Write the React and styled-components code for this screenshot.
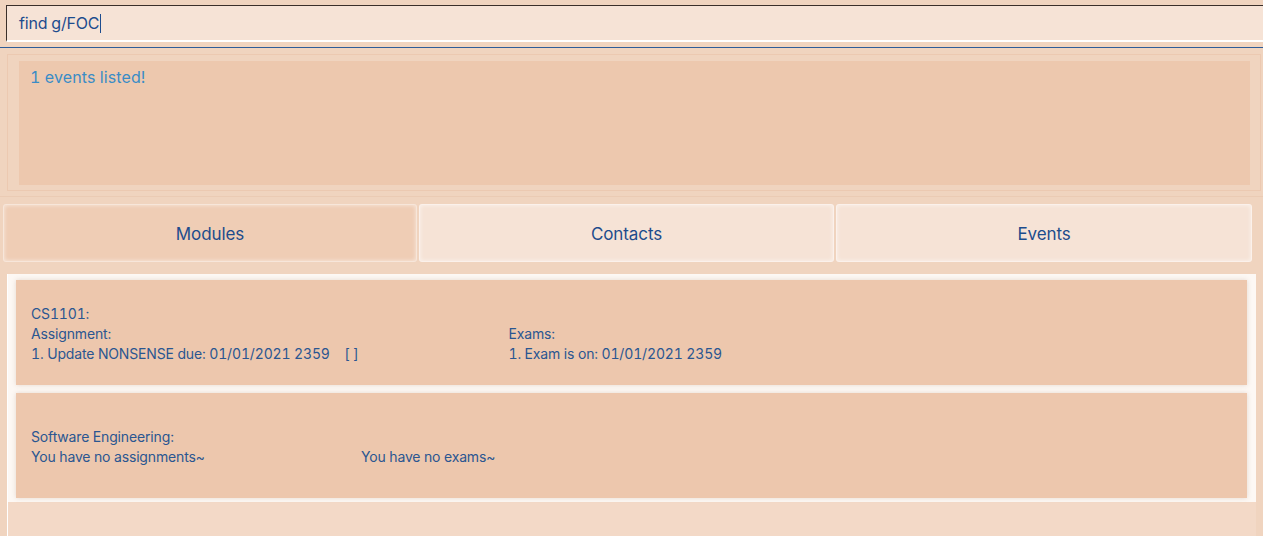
import React from "react";
import styled, { createGlobalStyle } from "styled-components";

const GlobalStyle = createGlobalStyle`
    html, body {
        margin: 0;
        padding: 0;
        background: #f0d4bf;
        font-family: "Inter", "Liberation Sans", sans-serif;
        font-variant-numeric: tabular-nums;
    }
`;

const modules = [
    {
        title: "CS1101:",
        assignments: ["1. Update NONSENSE due: 01/01/2021 2359\u00a0\u00a0\u00a0\u00a0[ ]"],
        exams: ["1. Exam is on: 01/01/2021 2359"],
    },
    {
        title: "Software Engineering:",
        assignments: [],
        exams: [],
    },
];

function App() {
    return (
        <Page>
            <GlobalStyle />
            <CommandBar>
                <CommandInput>
                    find g/FOC<Caret />
                </CommandInput>
            </CommandBar>
            <BlueRule />
            <ResultPanel>
                <ResultBox>1 events listed!</ResultBox>
            </ResultPanel>
            <FaintRule />
            <Tabs>
                <Tab selected>Modules</Tab>
                <Tab>Contacts</Tab>
                <Tab>Events</Tab>
            </Tabs>
            <ListArea>
                {modules.map((m) => (
                    <Cell key={m.title}>
                        <Card>
                            <Line>{m.title}</Line>
                            <Columns>
                                <Column>
                                    {m.assignments.length ? (
                                        <>
                                            <Line>Assignment:</Line>
                                            {m.assignments.map((a) => (
                                                <Line key={a}>{a}</Line>
                                            ))}
                                        </>
                                    ) : (
                                        <Line>You have no assignments~</Line>
                                    )}
                                </Column>
                                <Column>
                                    {m.exams.length ? (
                                        <>
                                            <Line>Exams:</Line>
                                            {m.exams.map((e) => (
                                                <Line key={e}>{e}</Line>
                                            ))}
                                        </>
                                    ) : (
                                        <Line>You have no exams~</Line>
                                    )}
                                </Column>
                            </Columns>
                        </Card>
                    </Cell>
                ))}
                <Filler />
            </ListArea>
        </Page>
    );
}

const Page = styled.div`
    width: 1263px;
    height: 536px;
    overflow: hidden;
    background: #f0d4bf;
`;

const CommandBar = styled.div`
    padding: 5px 0 0 6px;
`;

const CommandInput = styled.div`
    height: 34px;
    display: flex;
    align-items: center;
    padding-left: 12px;
    background: #f6e3d6;
    border-top: 1px solid #3a2f2a;
    border-left: 1px solid #3a2f2a;
    border-bottom: 2px solid #ffffff;
    color: #1d4c8e;
    font-size: 16px;
    letter-spacing: -0.2px;
`;

const Caret = styled.span`
    display: inline-block;
    width: 1px;
    height: 19px;
    margin-left: 1px;
    background: #1d4c8e;
`;

const BlueRule = styled.div`
    margin-top: 5px;
    height: 1px;
    background: #2e5c98;
`;

const ResultPanel = styled.div`
    margin: 6px 2px 0 7px;
    padding: 6px 10px 5px 11px;
    border: 1px solid #ecc9b1;
`;

const ResultBox = styled.div`
    height: 124px;
    box-sizing: border-box;
    padding: 6px 11px;
    background: #edc8ae;
    color: #3a8cc6;
    font-size: 16px;
    letter-spacing: 0.1px;
`;

const FaintRule = styled.div`
    margin-top: 5px;
    height: 1px;
    background: #ebcbb4;
`;

const Tabs = styled.div`
    display: grid;
    grid-template-columns: 414px 415px 416px;
    gap: 2px;
    margin: 7px 0 0 3px;
`;

const Tab = styled.div`
    height: 58px;
    box-sizing: border-box;
    display: flex;
    align-items: center;
    justify-content: center;
    padding-top: 1px;
    border-radius: 3px;
    background: ${(p) => (p.selected ? "#efcdb5" : "#f6e3d6")};
    border: 1px solid rgba(255, 255, 255, 0.5);
    box-shadow: inset 0 0 4px rgba(255, 255, 255, 0.6);
    color: #1d4c8c;
    font-size: 17px;
    letter-spacing: -0.1px;
`;

const ListArea = styled.div`
    margin: 12px 7px 0 7px;
    height: 262px;
    display: flex;
    flex-direction: column;
    border-left: 1px solid #ffffff;
    background: #f3d9c7;
`;

const Cell = styled.div`
    padding: 6px 9px 4px 8px;
    background: #fdf8f4;

    & + & {
        padding-top: 4px;
    }
`;

const Card = styled.div`
    height: 105px;
    box-sizing: border-box;
    display: flex;
    flex-direction: column;
    justify-content: center;
    padding: 3px 15px 0;
    background: #edc7ad;
    box-shadow: 0 0 5px rgba(120, 80, 50, 0.18);
    color: #2a5691;
    font-size: 14px;
    letter-spacing: -0.15px;
`;

const Columns = styled.div`
    display: flex;
    gap: 150px;
`;

const Column = styled.div`
    min-width: 180px;
    display: flex;
    flex-direction: column;
`;

const Line = styled.div`
    line-height: 20px;
    white-space: pre;
`;

const Filler = styled.div`
    flex: 1;
`;

export default App;
